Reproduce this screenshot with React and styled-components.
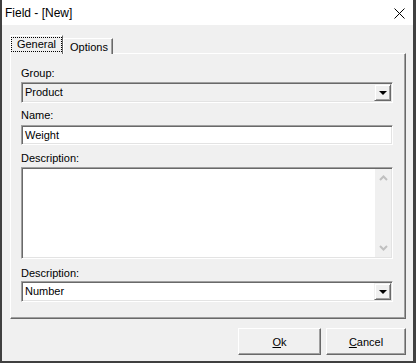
import styled, { createGlobalStyle } from 'styled-components';

const GlobalStyle = createGlobalStyle`
    html, body {
        margin: 0;
        padding: 0;
        background: #f0f0f0;
    }
    body {
        font-family: "Liberation Sans", Arial, sans-serif;
        font-size: 11px;
        color: #000;
    }
`

const Window = styled.div`
    width: 416px;
    height: 363px;
    box-sizing: border-box;
    border-left: 2px solid #404040;
    border-right: 3px solid #404040;
    border-bottom: 2px solid #404040;
    background: #f0f0f0;
    display: flex;
    flex-direction: column;
`

const TitleBar = styled.div`
    height: 25px;
    flex: none;
    background: #fff;
    display: flex;
    align-items: center;
    justify-content: space-between;
    padding: 0 8px 0 3px;
`

const Title = styled.span`
    font-size: 12px;
    line-height: 16px;
    padding-top: 1px;
`

const CloseIcon = styled.svg`
    display: block;
    width: 11px;
    height: 11px;
    margin-top: 1px;
`

const Body = styled.div`
    flex: 1;
    display: flex;
    flex-direction: column;
    padding: 10px 7px 6px 8px;
`

const TabRow = styled.div`
    display: flex;
    align-items: flex-end;
    margin-bottom: -1px;
    position: relative;
    z-index: 1;
`

const Tab = styled.div`
    box-sizing: border-box;
    height: ${p => p.$active ? '19px' : '16px'};
    width: ${p => p.$width}px;
    background: #f0f0f0;
    border-top: 1px solid #fff;
    border-left: 1px solid #fff;
    border-right: 1px solid #696969;
    box-shadow: ${p => p.$active ? 'none' : 'inset -1px 0 0 #a0a0a0'};
    padding: ${p => p.$active ? '1px 0 2px 0' : '0 0 0 6px'};
    display: flex;
    align-items: ${p => p.$active ? 'stretch' : 'center'};
`

const FocusLabel = styled.span`
    flex: 1;
    border: 1px dotted #000;
    display: flex;
    align-items: center;
    justify-content: center;
    line-height: 13px;
`

const Panel = styled.div`
    box-sizing: border-box;
    height: 266px;
    border-top: 1px solid #fff;
    border-left: 1px solid #fff;
    border-right: 1px solid #696969;
    border-bottom: 1px solid #696969;
    box-shadow: inset -1px -1px 0 #a0a0a0;
    padding: 13px 12px 0 10px;
    display: flex;
    flex-direction: column;
`

const Field = styled.div`
    display: flex;
    flex-direction: column;
    margin-top: ${p => p.$top || 0}px;
`

const Label = styled.label`
    line-height: 13px;
    height: 13px;
    margin-bottom: ${p => p.$gap ?? 2}px;
`

const Sunken = styled.div`
    box-sizing: border-box;
    position: relative;
    height: ${p => p.$height}px;
    background: ${p => p.$bg || '#fff'};
    border: 1px solid;
    border-color: #a0a0a0 #fff #fff #a0a0a0;
    box-shadow: inset 1px 1px 0 #696969, inset -1px -1px 0 #e3e3e3;
    padding: 1px 1px 1px 2px;
    display: flex;
    align-items: ${p => p.$multi ? 'stretch' : 'center'};
`

const ControlText = styled.span`
    flex: 1;
    padding-left: 1px;
    line-height: 13px;
    font-size: 11px;
`

const DropButton = styled.div`
    box-sizing: border-box;
    width: 17px;
    height: 17px;
    background: #f0f0f0;
    border-top: 1px solid #f0f0f0;
    border-left: 1px solid #f0f0f0;
    border-right: 1px solid #696969;
    border-bottom: 1px solid #696969;
    box-shadow: inset 1px 1px 0 #fff, inset -1px -1px 0 #a0a0a0;
    display: flex;
    align-items: center;
    justify-content: center;
`

const Arrow = styled.span`
    width: 0;
    height: 0;
    border-left: 4px solid transparent;
    border-right: 4px solid transparent;
    border-top: 4px solid #000;
    margin-top: 1px;
`

const ScrollBar = styled.div`
    width: 16px;
    background: #f0f0f0;
    display: flex;
    flex-direction: column;
    justify-content: space-between;
    align-items: center;
    padding: 6px 0;
`

const Chevron = styled.svg`
    display: block;
    width: 9px;
    height: 6px;
`

const ButtonRow = styled.div`
    display: flex;
    justify-content: flex-end;
    gap: 5px;
    margin-top: 9px;
`

const Button = styled.button`
    box-sizing: border-box;
    width: ${p => p.$width}px;
    height: 27px;
    background: #f0f0f0;
    border-top: 1px solid #fff;
    border-left: 1px solid #fff;
    border-right: 1px solid #696969;
    border-bottom: 1px solid #696969;
    box-shadow: inset -1px -1px 0 #a0a0a0;
    font-family: "Liberation Sans", Arial, sans-serif;
    font-size: 11px;
    color: #000;
    padding: 0;
    u { text-decoration: underline; text-underline-offset: 1px; }
`

const Select = ({ value, bg }) => (
    <Sunken $height={21} $bg={bg}>
        <ControlText>{value}</ControlText>
        <DropButton><Arrow /></DropButton>
    </Sunken>
)

const App = () => {
    return (
        <>
            <GlobalStyle />
            <Window>
                <TitleBar>
                    <Title>Field - [New]</Title>
                    <CloseIcon viewBox="0 0 11 11">
                        <path d="M0.5 0.5 L10.5 10.5 M10.5 0.5 L0.5 10.5" stroke="#000" strokeWidth="1" fill="none" />
                    </CloseIcon>
                </TitleBar>
                <Body>
                    <TabRow>
                        <Tab $active $width={53}>
                            <FocusLabel>General</FocusLabel>
                        </Tab>
                        <Tab $width={50}>Options</Tab>
                    </TabRow>
                    <Panel>
                        <Field>
                            <Label>Group:</Label>
                            <Select value="Product" bg="#f0f0f0" />
                        </Field>
                        <Field $top={6}>
                            <Label $gap={3}>Name:</Label>
                            <Sunken $height={20}>
                                <ControlText>Weight</ControlText>
                            </Sunken>
                        </Field>
                        <Field $top={7}>
                            <Label>Description:</Label>
                            <Sunken $height={92} $multi>
                                <ControlText />
                                <ScrollBar>
                                    <Chevron viewBox="0 0 9 6">
                                        <path d="M1 5 L4.5 1.5 L8 5" stroke="#c0c0c0" strokeWidth="2" fill="none" />
                                    </Chevron>
                                    <Chevron viewBox="0 0 9 6">
                                        <path d="M1 1 L4.5 4.5 L8 1" stroke="#c0c0c0" strokeWidth="2" fill="none" />
                                    </Chevron>
                                </ScrollBar>
                            </Sunken>
                        </Field>
                        <Field $top={8}>
                            <Label $gap={1}>Description:</Label>
                            <Select value="Number" bg="#fff" />
                        </Field>
                    </Panel>
                    <ButtonRow>
                        <Button $width={83}><u>O</u>k</Button>
                        <Button $width={80}><u>C</u>ancel</Button>
                    </ButtonRow>
                </Body>
            </Window>
        </>
    )
}

export default App
